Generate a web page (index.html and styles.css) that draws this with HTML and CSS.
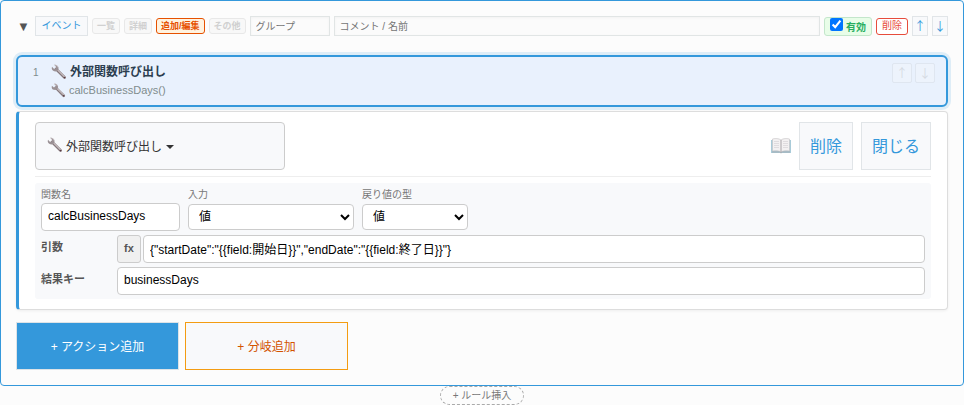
FILE: index.html
```html
<!DOCTYPE html>
<html lang="ja">
<head>
    <meta charset="UTF-8">
    <meta name="viewport" content="width=device-width, initial-scale=1.0">
    <title>ルール編集</title>
    <link rel="stylesheet" href="styles.css">
</head>
<body>
    <svg class="defs" width="0" height="0" aria-hidden="true">
        <symbol id="wrench" viewBox="0 0 16 16">
            <path d="M5 5 L13.6 13.6" stroke="#85787c" stroke-width="2.8" stroke-linecap="round"/>
            <path d="M5.4 4.8 L13.8 13" stroke="#c4babd" stroke-width="1.2" stroke-linecap="round"/>
            <path d="M3.2 .8 L5.2 3 L4.7 4.5 L3.1 4.9 L1 2.8 C.2 4.8 1.2 6.8 3.2 7.3 C4.6 7.6 5.8 7.2 6.6 6.4 C7.6 5.4 7.8 4 7.2 2.7 C6.4 1.1 4.7 .4 3.2 .8Z" fill="#9a9094"/>
            <path d="M3.6 1.1 C5.2 1 6.5 2 6.9 3.4" stroke="#d2cbcd" stroke-width=".8" fill="none"/>
            <circle cx="13.5" cy="13.5" r=".8" fill="#5a3b42"/>
        </symbol>
    </svg>

    <section class="rule">
        <div class="rule-header">
            <span class="toggle">▼</span>
            <button class="btn btn-event">イベント</button>
            <button class="tag">一覧</button>
            <button class="tag">詳細</button>
            <button class="tag active">追加/編集</button>
            <button class="tag">その他</button>
            <input type="text" class="meta group" placeholder="グループ" aria-label="グループ">
            <input type="text" class="meta comment" placeholder="コメント / 名前" aria-label="コメント / 名前">
            <label class="enabled"><input type="checkbox" checked>有効</label>
            <button class="btn-delete">削除</button>
            <button class="btn btn-move">↑</button>
            <button class="btn btn-move">↓</button>
        </div>

        <div class="step">
            <span class="step-no">1</span>
            <div class="step-body">
                <div class="step-title"><svg class="icon"><use href="#wrench"/></svg>外部関数呼び出し</div>
                <div class="step-detail"><svg class="icon"><use href="#wrench"/></svg>calcBusinessDays()</div>
            </div>
            <div class="step-move">
                <button disabled>↑</button>
                <button disabled>↓</button>
            </div>
        </div>

        <div class="editor">
            <div class="editor-header">
                <button class="type-picker"><svg class="icon"><use href="#wrench"/></svg>外部関数呼び出し<span class="caret"></span></button>
                <svg class="book" viewBox="0 0 20 16">
                    <path d="M0 2 H20 V15 H0Z" fill="#a9cbd9"/>
                    <path d="M1.5 1 C4.5 .2 8 .4 10 2 C12 .4 15.5 .2 18.5 1 V13 C15.5 12.4 12 12.6 10 14 C8 12.6 4.5 12.4 1.5 13Z" fill="#f3f1f2" stroke="#c4c1c3" stroke-width=".6"/>
                    <path d="M1 14 H8.5 L10 15 L11.5 14 H19" stroke="#a3a5a9" fill="none" stroke-width=".8"/>
                    <path d="M10 2 V14" stroke="#a8a4a8" stroke-width="1"/>
                    <path d="M3 3.5 H8 M3 5.5 H8 M3 7.5 H8 M3 9.5 H8 M12 3.5 H17 M12 5.5 H17 M12 7.5 H17 M12 9.5 H17" stroke="#d9d7d9" stroke-width=".8"/>
                </svg>
                <button class="btn btn-large">削除</button>
                <button class="btn btn-large">閉じる</button>
            </div>

            <div class="params">
                <div class="fields">
                    <div class="field field-name">
                        <label for="fn">関数名</label>
                        <input type="text" id="fn" class="control" value="calcBusinessDays">
                    </div>
                    <div class="field field-input">
                        <label for="input-type">入力</label>
                        <select id="input-type" class="control"><option>値</option></select>
                    </div>
                    <div class="field field-return">
                        <label for="return-type">戻り値の型</label>
                        <select id="return-type" class="control"><option>値</option></select>
                    </div>
                </div>
                <div class="row">
                    <label for="args">引数</label>
                    <button class="fx">fx</button>
                    <input type="text" id="args" class="control" value='{"startDate":"{{field:開始日}}","endDate":"{{field:終了日}}"}'>
                </div>
                <div class="row">
                    <label for="result">結果キー</label>
                    <input type="text" id="result" class="control" value="businessDays">
                </div>
            </div>
        </div>

        <div class="actions">
            <button class="add add-action">+ アクション追加</button>
            <button class="add add-branch">+ 分岐追加</button>
        </div>
    </section>

    <div class="insert">
        <button class="btn-insert">+ ルール挿入</button>
    </div>
</body>
</html>
```

FILE: styles.css
```css
* {
    box-sizing: border-box;
}
body {
    margin: 0;
    background: #fcfcfc;
    color: #333;
    font-family: "Liberation Sans", "Noto Sans CJK JP", sans-serif;
    font-size: 12px;
}
button, input, select {
    font-family: inherit;
    margin: 0;
}
button {
    padding: 0;
    cursor: pointer;
    white-space: nowrap;
}
.defs {
    display: block;
}
.rule {
    border: 1px solid #3498db;
    border-radius: 4px;
    padding: 15px;
}

/* header */
.rule-header {
    display: flex;
    align-items: center;
    gap: 4px;
    height: 20px;
    margin-bottom: 19px;
}
.toggle {
    width: 15px;
    text-align: center;
    font-size: 13px;
    color: #555;
}
.btn {
    border: 1px solid #e1e5e8;
    background: #f8f9fb;
    color: #3498db;
}
.btn-event {
    width: 53px;
    height: 20px;
    font-size: 10px;
    line-height: 16px;
}
.btn-move {
    width: 16px;
    height: 20px;
    font-family: "Noto Sans CJK JP", sans-serif;
    font-size: 12px;
    line-height: 16px;
}
.tag {
    height: 16px;
    padding: 0 4px;
    border: 1px solid #e8e8e8;
    border-radius: 3px;
    background: #f8f8f8;
    color: #d0d0d0;
    font-size: 9px;
    font-weight: bold;
    line-height: 12px;
}
.tag.active {
    border-color: #e65100;
    background: #fff3e0;
    color: #e65100;
}
.meta {
    height: 20px;
    min-width: 0;
    padding: 0 5px;
    border: 1px solid #e1e5e5;
    background: #fbfbfb;
    box-shadow: inset 0 1px 3px rgba(0, 0, 0, 0.04);
    font-size: 10px;
}
.meta::placeholder {
    color: #757575;
}
.group {
    width: 80px;
}
.comment {
    flex: 1;
}
.enabled {
    display: flex;
    gap: 3px;
    height: 19px;
    padding: 0 5px;
    border: 1px solid #c3e6cb;
    border-radius: 3px;
    background: #e8fde8;
    color: #27ae60;
    font-size: 10px;
    font-weight: bold;
    line-height: 19px;
}
.enabled input {
    width: 13px;
    height: 13px;
    accent-color: #0075ff;
}
.btn-delete {
    width: 32px;
    height: 17px;
    border: 1px solid #e74c3c;
    border-radius: 3px;
    background: #fff;
    color: #e74c3c;
    font-size: 10px;
    line-height: 14px;
}

/* selected step */
.step {
    display: flex;
    height: 52px;
    margin-bottom: 4px;
    padding: 6px 11px 0 15px;
    border: 2px solid #3498db;
    border-radius: 6px;
    background: #e9f1fd;
    box-shadow: 0 0 0 3px rgba(52, 152, 219, 0.15);
}
.step-no {
    width: 18px;
    color: #7f8c8d;
    font-size: 10px;
    line-height: 20px;
}
.step-body {
    flex: 1;
}
.step-title, .step-detail {
    display: flex;
    align-items: center;
    gap: 3px;
    height: 18px;
    line-height: 16px;
}
.step-title {
    color: #2c3e50;
    font-weight: bold;
}
.step-detail {
    color: #7f8c8d;
    font-size: 11px;
}
.icon {
    flex: none;
    width: 16px;
    height: 16px;
}
.step-detail .icon {
    width: 15px;
    height: 15px;
}
.step-move {
    display: flex;
    gap: 3px;
}
.step-move button {
    width: 20px;
    height: 20px;
    border: 1px solid #dfe6f0;
    border-radius: 2px;
    background: #edf3fc;
    color: #d5dae2;
    font-family: "Noto Sans CJK JP", sans-serif;
    font-size: 12px;
    line-height: 14px;
}

/* step editor */
.editor {
    padding: 10px 16px;
    border: 1px solid #ddd;
    border-left: 3px solid #3498db;
    border-radius: 4px;
    background: #fff;
    box-shadow: 0 1px 3px rgba(0, 0, 0, 0.06);
}
.editor-header {
    display: flex;
    align-items: center;
    gap: 8px;
    margin-bottom: 6px;
    padding-bottom: 6px;
    border-bottom: 1px solid #eee;
}
.type-picker {
    display: flex;
    align-items: center;
    width: 250px;
    height: 48px;
    margin-right: auto;
    padding: 0 11px 2px;
    border: 1px solid #ccc;
    border-radius: 4px;
    background: #f8f9fb;
    color: #333;
    font-size: 12px;
}
.type-picker .icon {
    margin-right: 3px;
}
.caret {
    margin: 3px 0 0 4px;
    border: 4px solid transparent;
    border-top-color: #333;
    border-bottom: 0;
}
.book {
    width: 20px;
    height: 16px;
}
.btn-large {
    height: 48px;
    padding: 0 10px 2px;
    font-size: 16px;
}
.params {
    display: flex;
    flex-direction: column;
    gap: 4px;
    padding: 4px 6px;
    border-radius: 3px;
    background: #f8f9fb;
}
.fields {
    display: flex;
    gap: 8px;
}
.field {
    display: flex;
    flex-direction: column;
}
.field label {
    height: 16px;
    color: #777;
    font-size: 10px;
    line-height: 16px;
}
.field-name {
    width: 139px;
}
.field-input {
    width: 166px;
}
.field-return {
    width: 106px;
}
.control {
    width: 100%;
    min-width: 0;
    height: 28px;
    padding: 0 6px 2px;
    border: 1px solid #ccc;
    border-radius: 4px;
    background: #fff;
    color: #000;
    font-size: 12px;
}
select.control {
    height: 26px;
    margin: 1px 0;
    padding: 0 6px;
}
.row {
    display: flex;
}
.row label {
    flex: none;
    width: 76px;
    color: #555;
    font-size: 11px;
    font-weight: bold;
    line-height: 24px;
}
.row .control {
    flex: 1;
}
.fx {
    width: 24px;
    height: 28px;
    margin-right: 2px;
    padding-bottom: 2px;
    border: 1px solid #ccc;
    border-radius: 3px;
    background: #f0f0f0;
    color: #555;
    font-size: 11px;
    font-weight: bold;
}

/* bottom buttons */
.actions {
    display: flex;
    gap: 6px;
    margin-top: 12px;
}
.add {
    width: 163px;
    height: 48px;
    padding-bottom: 2px;
    font-size: 12px;
}
.add-action {
    border: 1px solid #dde3e7;
    background: #3498db;
    color: #fff;
}
.add-branch {
    border: 1px solid #f39c12;
    background: #f8f9fb;
    color: #d35400;
}
.insert {
    display: flex;
    justify-content: center;
}
.btn-insert {
    width: 84px;
    height: 19px;
    padding-bottom: 2px;
    border: 1px dashed #aaa;
    border-radius: 10px;
    background: transparent;
    color: #777;
    font-size: 10px;
}
```
